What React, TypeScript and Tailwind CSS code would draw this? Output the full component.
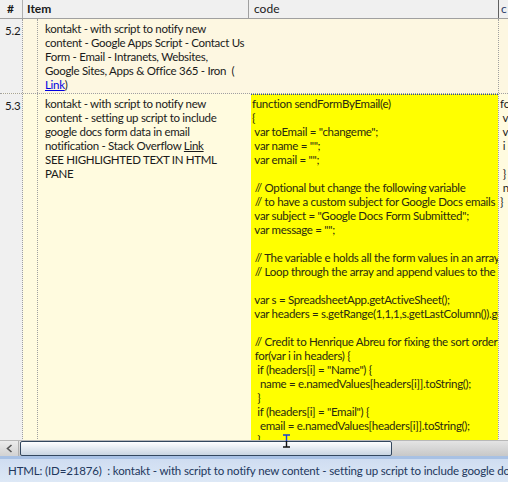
import React from 'react';

const item52 = [
  'kontakt - with script to notify new',
  'content - Google Apps Script - Contact Us',
  'Form - Email - Intranets, Websites,',
  'Google Sites, Apps & Office 365 - Iron  (',
];

const item53 = [
  'kontakt - with script to notify new',
  'content - setting up script to include',
  'google docs form data in email',
];

const code = [
  'function sendFormByEmail(e)',
  '{',
  ' var toEmail = "changeme";',
  ' var name = "";',
  ' var email = "";',
  '',
  ' // Optional but change the following variable',
  ' // to have a custom subject for Google Docs emails',
  ' var subject = "Google Docs Form Submitted";',
  ' var message = "";',
  '',
  ' // The variable e holds all the form values in an array.',
  ' // Loop through the array and append values to the body.',
  '',
  ' var s = SpreadsheetApp.getActiveSheet();',
  ' var headers = s.getRange(1,1,1,s.getLastColumn()).getValues()[0];',
  '',
  ' // Credit to Henrique Abreu for fixing the sort order',
  ' for(var i in headers) {',
  '  if (headers[i] = "Name") {',
  '   name = e.namedValues[headers[i]].toString();',
  '  }',
  '  if (headers[i] = "Email") {',
  '   email = e.namedValues[headers[i]].toString();',
  '  }',
];

const nextCol = ['fo', ' v', ' v', ' i', '', ' }', ' n', '}'];

const Line: React.FC<{ text: string }> = ({ text }) => (
  <div className="h-[14px] whitespace-pre">{text === '' ? '\u00a0' : text}</div>
);

export default function App() {
  return (
    <div className="relative w-[508px] h-[482px] overflow-hidden flex flex-col bg-white text-[11.5px] tracking-[-0.15px] leading-[14px] text-[#1a1a1a] font-['Lato','Open_Sans',sans-serif]">
      {/* header */}
      <div className="flex h-[19px] shrink-0 bg-[#f0f0f0] border-b border-[#a0a0a0] text-[12px] tracking-normal">
        <div className="w-[23px] shrink-0 border-r border-[#b0b0b0] pl-[7px] pt-[2px] font-bold">#</div>
        <div className="w-[226px] shrink-0 border-r border-[#a0a0a0] pl-[4px] pt-[2px] font-bold">Item</div>
        <div className="w-[250px] shrink-0 border-r border-[#606060] pl-[5px] pt-[2px]">code</div>
        <div className="flex-1 pl-[2px] pt-[2px] text-[#2a3a6a]">c</div>
      </div>

      {/* rows */}
      <div className="flex-1 flex flex-col overflow-hidden">
        <div className="flex h-[75px] shrink-0 bg-[#fdf7e1] border-b border-dotted border-[#a0a0a0]">
          <div className="w-[23px] shrink-0 bg-[#f0f0f0] border-r border-dotted border-[#a0a0a0] pl-[5px] pt-[5px]">5.2</div>
          <div className="w-[15px] shrink-0 border-r border-dotted border-[#a0a0a0]" />
          <div className="w-[211px] shrink-0 pl-[7px] pt-[3px] whitespace-nowrap overflow-hidden tracking-[-0.3px]">
            {item52.map((t, i) => <Line key={i} text={t} />)}
            <div className="h-[14px]">
              <span className="text-[#0000e0] underline">Link</span>)
            </div>
          </div>
          <div className="w-[250px] shrink-0 border-r border-dotted border-[#a0a0a0]" />
          <div className="flex-1" />
        </div>

        <div className="flex flex-1 bg-[#fffbdf]">
          <div className="w-[23px] shrink-0 bg-[#f0f0f0] border-r border-dotted border-[#a0a0a0] pl-[5px] pt-[5px]">5.3</div>
          <div className="w-[15px] shrink-0 border-r border-dotted border-[#a0a0a0]" />
          <div className="w-[211px] shrink-0 pl-[7px] pt-[3px] whitespace-nowrap overflow-hidden tracking-[-0.3px]">
            {item53.map((t, i) => <Line key={i} text={t} />)}
            <div className="h-[14px]">
              notification - Stack Overflow <span className="underline">Link</span>
            </div>
            <Line text="SEE HIGHLIGHTED TEXT IN HTML" />
            <Line text="PANE" />
          </div>
          <div className="w-[250px] shrink-0 border-r border-dotted border-[#a0a0a0] pl-[2px]">
            <div className="h-full bg-[#ffff00] border-t border-dotted border-[#2040c0] pl-[1px] pt-[2px] overflow-hidden text-[#2a2a10] tracking-[-0.3px]">
              {code.map((t, i) => <Line key={i} text={t} />)}
            </div>
          </div>
          <div className="flex-1 pl-[1px] pt-[3px] overflow-hidden">
            {nextCol.map((t, i) => <Line key={i} text={t} />)}
          </div>
        </div>
      </div>

      {/* horizontal scrollbar */}
      <div className="flex h-[16px] shrink-0 bg-gradient-to-b from-[#e4e4e4] to-[#c8c8c8] border-t border-[#b8b8b8]">
        <div className="w-[19px] shrink-0 flex items-center justify-center bg-gradient-to-b from-[#ececec] to-[#d2d2d2] border-r border-[#b0b0b0]">
          <svg width="7" height="9" viewBox="0 0 7 9">
            <path d="M5.5 1 L1.5 4.5 L5.5 8" fill="none" stroke="#555" strokeWidth="1.6" />
          </svg>
        </div>
        <div className="w-[372px] shrink-0 ml-px rounded-[2px] border border-[#33475e] bg-gradient-to-b from-[#ffffff] to-[#c9d5e2]" />
        <div className="flex-1" />
      </div>

      {/* status bar */}
      <div className="h-[26px] shrink-0 border-t-[3px] border-[#a8c1e4] bg-gradient-to-b from-[#cfddf1] to-[#dde8f6] pl-[8px] pt-[5px] whitespace-pre overflow-hidden text-[#22375c]">
        HTML: (ID=21876)  : kontakt - with script to notify new content - setting up script to include google docs form data in email notification
      </div>

      {/* text cursor */}
      <svg className="absolute left-[282px] top-[434px]" width="9" height="14" viewBox="0 0 9 14">
        <path d="M1 1 H8 M4.5 1 V7" stroke="#1a40d0" strokeWidth="1.4" fill="none" />
        <path d="M4.5 7 V13 M1 13 H8" stroke="#111" strokeWidth="1.4" fill="none" />
      </svg>
    </div>
  );
}
